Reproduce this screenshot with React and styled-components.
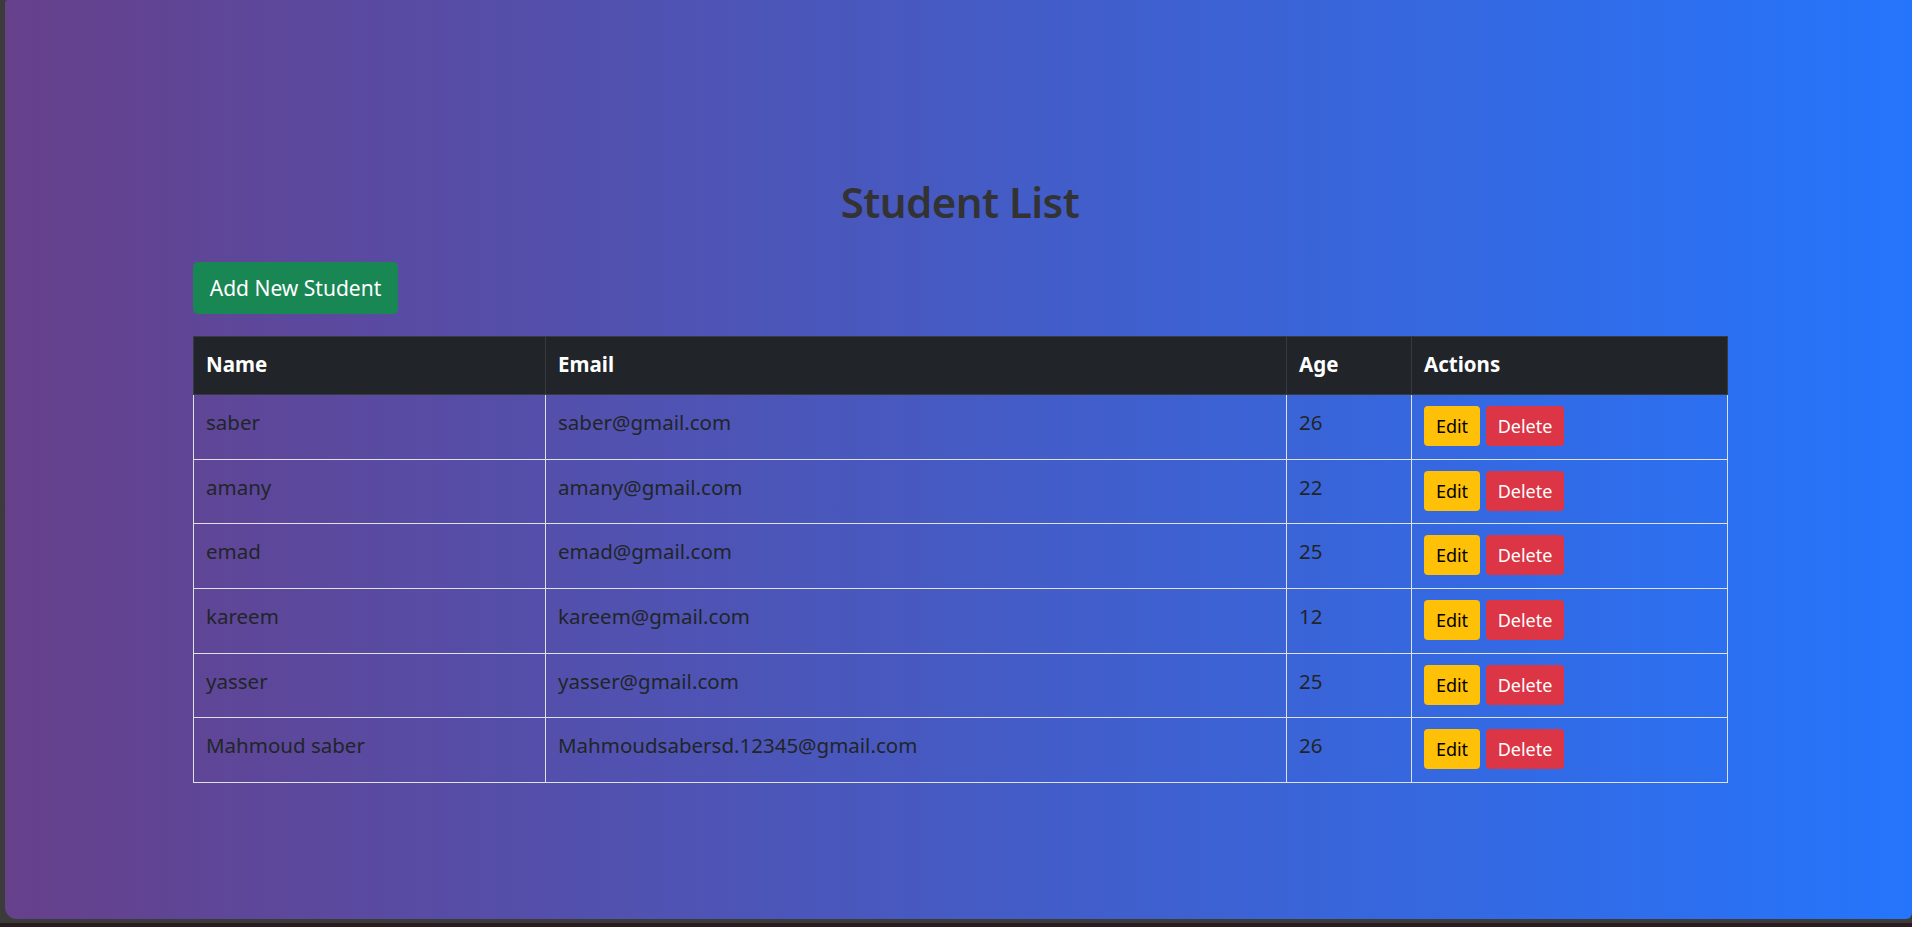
import React from "react";
import styled, { createGlobalStyle } from "styled-components";

const GlobalStyle = createGlobalStyle`
  html, body {
    margin: 0;
    padding: 0;
    background: #3b3b3b;
    overflow: hidden;
  }
  body {
    font-family: "Noto Sans", "Open Sans", "DejaVu Sans", sans-serif;
  }
`;

const Frame = styled.div`
  display: flex;
  flex-direction: column;
  height: 927px;
  background: #3b3b3b;
`;

const Panel = styled.main`
  box-sizing: border-box;
  margin-left: 5px;
  height: 919px;
  padding: 173px 185px 0 188px;
  background: linear-gradient(to right, #66408b 0%, #2575fc 100%);
  border-radius: 3px 0 6px 12px;
`;

const BottomStrip = styled.div`
  margin-top: 4px;
  height: 4px;
  background: #2a1b1e;
`;

const Title = styled.h2`
  margin: 0;
  text-align: center;
  font-size: 42px;
  line-height: 58px;
  font-weight: 600;
  letter-spacing: -0.55px;
  color: #333333;
`;

const Button = styled.button`
  box-sizing: border-box;
  border: none;
  font-family: inherit;
  cursor: pointer;
  display: inline-flex;
  align-items: center;
  justify-content: center;
  white-space: nowrap;
  background: ${(p) => p.$bg};
  color: ${(p) => p.$fg};
`;

const AddButton = styled(Button)`
  margin-top: 31px;
  width: 205px;
  height: 52px;
  border-radius: 5px;
  font-size: 21px;
`;

const SmallButton = styled(Button)`
  width: ${(p) => p.$w}px;
  height: 40px;
  border-radius: 4px;
  font-size: 18px;
`;

const Table = styled.table`
  margin-top: 22px;
  width: 100%;
  table-layout: fixed;
  border-collapse: collapse;
  color: #212529;
  font-size: 20.5px;
`;

const Col = styled.col`
  width: ${(p) => p.$w}px;
`;

const HeadRow = styled.tr`
  height: 58px;
`;

const HeadCell = styled.th`
  box-sizing: border-box;
  background: #212529;
  color: #ffffff;
  text-align: left;
  vertical-align: top;
  font-weight: 700;
  padding: 11px 12px;
  line-height: 33px;
  border: 1px solid #373b3e;
`;

const BodyRow = styled.tr`
  height: 64.67px;
`;

const Cell = styled.td`
  vertical-align: top;
  padding: 11px 12px;
  line-height: 33px;
  border: 1px solid #dee2e6;
`;

const Actions = styled.div`
  display: flex;
  gap: 6px;
`;

const students = [
  { name: "saber", email: "saber@gmail.com", age: 26 },
  { name: "amany", email: "amany@gmail.com", age: 22 },
  { name: "emad", email: "emad@gmail.com", age: 25 },
  { name: "kareem", email: "kareem@gmail.com", age: 12 },
  { name: "yasser", email: "yasser@gmail.com", age: 25 },
  { name: "Mahmoud saber", email: "Mahmoudsabersd.12345@gmail.com", age: 26 },
];

export default function App() {
  return (
    <>
      <GlobalStyle />
      <Frame>
        <Panel>
          <Title>Student List</Title>
          <AddButton $bg="#198754" $fg="#ffffff">Add New Student</AddButton>
          <Table>
            <colgroup>
              <Col $w={352} />
              <Col $w={741} />
              <Col $w={125} />
              <Col $w={316} />
            </colgroup>
            <thead>
              <HeadRow>
                <HeadCell>Name</HeadCell>
                <HeadCell>Email</HeadCell>
                <HeadCell>Age</HeadCell>
                <HeadCell>Actions</HeadCell>
              </HeadRow>
            </thead>
            <tbody>
              {students.map((s) => (
                <BodyRow key={s.email}>
                  <Cell>{s.name}</Cell>
                  <Cell>{s.email}</Cell>
                  <Cell>{s.age}</Cell>
                  <Cell>
                    <Actions>
                      <SmallButton $w={56} $bg="#ffc107" $fg="#000000">Edit</SmallButton>
                      <SmallButton $w={78} $bg="#dc3545" $fg="#ffffff">Delete</SmallButton>
                    </Actions>
                  </Cell>
                </BodyRow>
              ))}
            </tbody>
          </Table>
        </Panel>
        <BottomStrip />
      </Frame>
    </>
  );
}
